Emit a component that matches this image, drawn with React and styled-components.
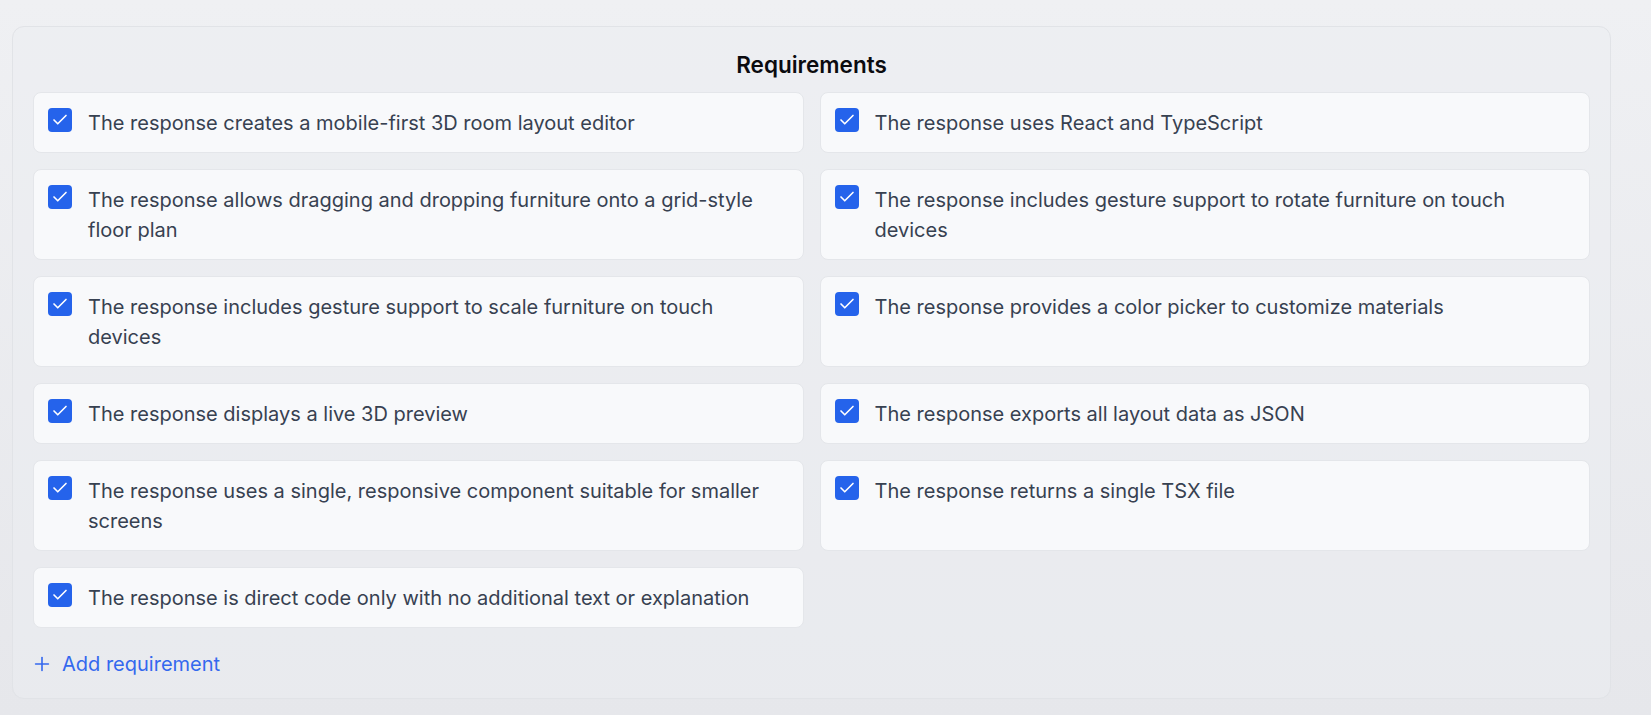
import React from "react";
import styled, { createGlobalStyle } from "styled-components";
import { Check, Plus } from "lucide-react";

const Global = createGlobalStyle`
  html, body { margin: 0; padding: 0; }
  body {
    min-height: 715px;
    background: linear-gradient(180deg, #eff0f3 0%, #e6e7eb 100%);
    font-family: Inter, "Noto Sans", "Liberation Sans", sans-serif;
    -webkit-font-smoothing: antialiased;
  }
`;

const Page = styled.div`
  padding: 26px 40px 0 12px;
`;

const Panel = styled.section`
  border: 1px solid #e1e3e7;
  border-radius: 12px;
  background: rgba(236, 237, 241, 0.5);
  padding: 23px 20px 19px;
`;

const Title = styled.h2`
  margin: 0 0 12px;
  text-align: center;
  font-size: 22.5px;
  line-height: 30px;
  font-weight: 600;
  color: #0b0b0f;
`;

const Grid = styled.div`
  display: grid;
  grid-template-columns: 1fr 1fr;
  gap: 16px;
`;

const Card = styled.label`
  display: flex;
  align-items: flex-start;
  gap: 16px;
  padding: 14.5px 14px;
  background: #f8f9fb;
  border: 1px solid #e4e6ea;
  border-radius: 8px;
  cursor: pointer;
`;

const Box = styled.span`
  flex: none;
  width: 24px;
  height: 24px;
  margin-top: 0.5px;
  border-radius: 4px;
  background: ${(p) => (p.$checked ? "#2563eb" : "#fff")};
  display: flex;
  align-items: center;
  justify-content: center;
  color: #fff;
`;

const Text = styled.span`
  font-size: 20px;
  line-height: 30px;
  color: #374151;
`;

const AddButton = styled.button`
  display: inline-flex;
  align-items: center;
  gap: 9px;
  margin: 21.5px 0 0 -2px;
  padding: 0;
  border: none;
  background: none;
  color: #3468ee;
  font-family: inherit;
  font-size: 20px;
  line-height: 28px;
  cursor: pointer;
`;

const items = [
  "The response creates a mobile-first 3D room layout editor",
  "The response uses React and TypeScript",
  "The response allows dragging and dropping furniture onto a grid-style floor plan",
  "The response includes gesture support to rotate furniture on touch devices",
  "The response includes gesture support to scale furniture on touch devices",
  "The response provides a color picker to customize materials",
  "The response displays a live 3D preview",
  "The response exports all layout data as JSON",
  "The response uses a single, responsive component suitable for smaller screens",
  "The response returns a single TSX file",
  "The response is direct code only with no additional text or explanation",
];

export default function App() {
  return (
    <>
      <Global />
      <Page>
        <Panel>
          <Title>Requirements</Title>
          <Grid>
            {items.map((t) => (
              <Card key={t}>
                <Box $checked>
                  <Check size={18} strokeWidth={2.2} />
                </Box>
                <Text>{t}</Text>
              </Card>
            ))}
          </Grid>
          <AddButton>
            <Plus size={22} strokeWidth={1.75} />
            Add requirement
          </AddButton>
        </Panel>
      </Page>
    </>
  );
}
